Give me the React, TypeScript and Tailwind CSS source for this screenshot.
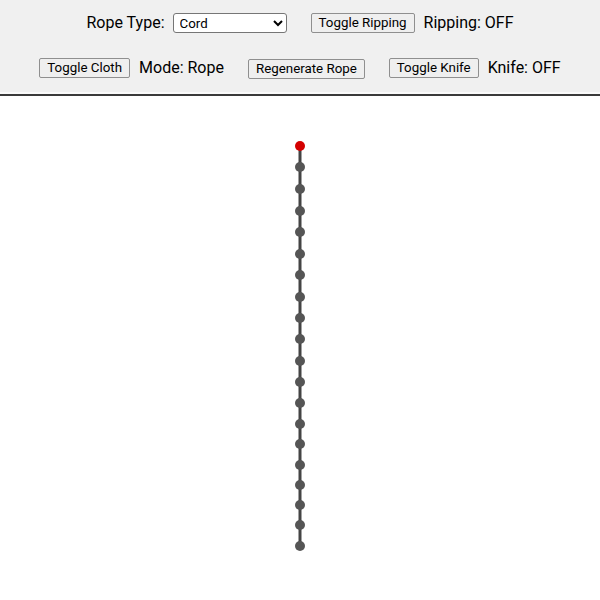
import React, { useState } from "react"

// node positions along the hanging rope (page y)
const ropeYs = [146, 167, 189, 211, 232, 254, 275, 297, 318, 339, 361, 382, 403, 424, 444, 465, 485, 505, 525, 546]

function NativeButton({ children, onClick }: { children: React.ReactNode; onClick?: () => void }) {
  return (
    <button
      onClick={onClick}
      className="h-[20px] px-[7px] text-[13.33px] leading-none text-black bg-[#efefef] border border-[#8f8f8f] rounded-[2px] font-['Roboto',sans-serif]"
    >
      {children}
    </button>
  )
}

export default function App() {
  const [ripping, setRipping] = useState(false)
  const [cloth, setCloth] = useState(false)
  const [knife, setKnife] = useState(false)
  const [ropeType, setRopeType] = useState("cord")

  return (
    <div className="w-[600px] h-[600px] bg-white font-['Roboto',sans-serif] text-black overflow-hidden">
      <div className="h-[92px] bg-[#f0f0f0] pt-[13px] flex flex-col items-center gap-[25px]">
        <div className="h-[20px] flex items-center">
          <div className="flex items-center gap-[8px]">
            <span className="text-[16px]">Rope Type:</span>
            <select
              value={ropeType}
              onChange={(e) => setRopeType(e.target.value)}
              className="w-[114px] h-[20px] text-[13.33px] bg-white border border-[#767676] rounded-[3px] pl-[2px]"
            >
              <option value="cord">Cord</option>
              <option value="chain">Chain</option>
              <option value="elastic">Elastic</option>
            </select>
          </div>
          <div className="flex items-center gap-[9px] ml-[24px]">
            <NativeButton onClick={() => setRipping(!ripping)}>Toggle Ripping</NativeButton>
            <span className="text-[16px]">Ripping: {ripping ? "ON" : "OFF"}</span>
          </div>
        </div>
        <div className="h-[20px] flex items-center">
          <div className="flex items-center gap-[9px]">
            <NativeButton onClick={() => setCloth(!cloth)}>Toggle Cloth</NativeButton>
            <span className="text-[16px]">Mode: {cloth ? "Cloth" : "Rope"}</span>
          </div>
          <div className="ml-[24px]">
            <NativeButton>Regenerate Rope</NativeButton>
          </div>
          <div className="flex items-center gap-[9px] ml-[24px]">
            <NativeButton onClick={() => setKnife(!knife)}>Toggle Knife</NativeButton>
            <span className="text-[16px]">Knife: {knife ? "ON" : "OFF"}</span>
          </div>
        </div>
      </div>
      <div className="h-[2px] bg-[#fafafa]" />
      <div className="h-[2px] bg-[#3a3a3a]" />
      <svg width="600" height="504" viewBox="0 96 600 504" className="block">
        <polyline
          points={ropeYs.map((y) => `300,${y}`).join(" ")}
          fill="none"
          stroke="#444"
          strokeWidth="3"
        />
        {ropeYs.map((y, i) => (
          <circle key={i} cx="300" cy={y} r="5" fill={i === 0 ? "#d40000" : "#555"} />
        ))}
      </svg>
    </div>
  )
}
